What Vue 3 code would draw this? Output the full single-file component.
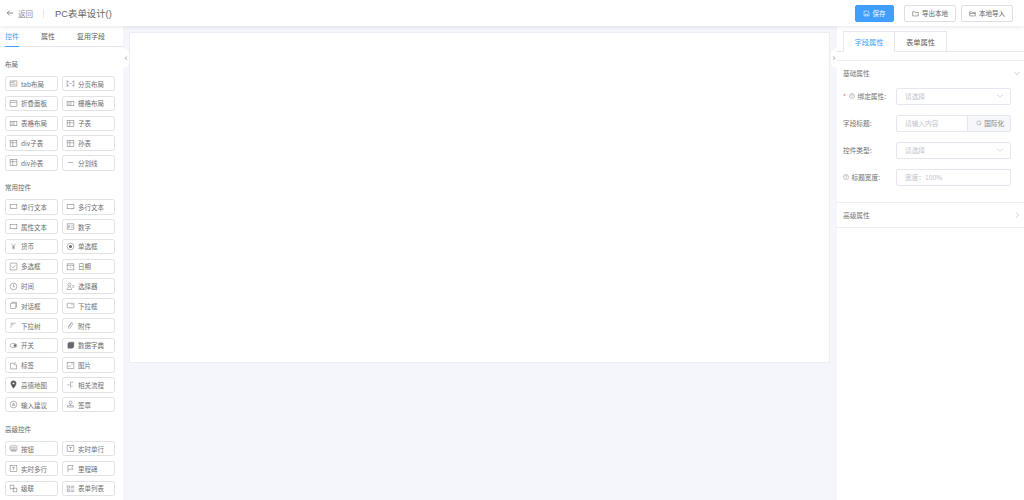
<script setup>
const icons = {
  tab: '<path d="M1.500 2.500h9v7h-9zM1.500 4.500h5v-2M3 7h6" />',
  page: '<path d="M1.500 1.500v9M10.500 1.500v9M1.500 3.500h2.500M8 3.500h2.500M1.500 8.500h2.500M8 8.500h2.500M4.500 6h3" />',
  fold: '<rect x="1.500" y="2" width="9" height="8" rx=".5"/><path d="M1.500 4.500h9"/>',
  grid: '<rect x="1.500" y="3" width="9" height="6"/><path d="M6.500 3v6M3 5h2M3 7h2"/>',
  table: '<rect x="1.500" y="2" width="9" height="8"/><path d="M1.500 5h9M5 2v8"/>',
  line: '<path d="M2.500 6h7"/>',
  input: '<rect x="1.500" y="3.500" width="9" height="5"/>',
  area: '<rect x="1.500" y="3" width="9" height="6"/><path d="M8 9v1"/>',
  num: '<rect x="1.500" y="2.500" width="9" height="7"/><path d="M3 5h2v2H3zM7 5h2M7 7h2"/>',
  yen: '<path d="M3.500 2.500 6 6l2.500-3.500M6 6v4M4 6.500h4M4 8h4"/>',
  radio: '<circle cx="6" cy="6" r="4.500"/><circle cx="6" cy="6" r="2" fill="#666" stroke="none"/>',
  check: '<rect x="1.500" y="1.500" width="9" height="9" rx=".5"/><path d="m3.500 6 2 2 3-4"/>',
  date: '<rect x="1.500" y="2.500" width="9" height="8"/><path d="M1.500 4.500h9M5 7h2"/>',
  time: '<circle cx="6" cy="6" r="4.500"/><path d="M6 3v3.500h2"/>',
  user: '<circle cx="4.500" cy="3.500" r="2"/><path d="M1.500 10c0-2.500 1.500-3.500 3-3.500s3 1 3 3.500zM8 5h3M8.500 7H11"/>',
  dialog: '<rect x="2" y="3" width="7" height="7" rx=".5"/><path d="M4 3V1.800h6V8H9"/>',
  select: '<rect x="1.500" y="3" width="9" height="6" rx=".5"/><path d="M7 5h2"/>',
  tree: '<path d="M2 3h7M2 5h4M2 7h2M2 9h1"/>',
  clip: '<path d="m7.500 3-4 5c-1 1.500 1 2.500 2 1.200l3.200-4.700C10 3.500 8 1 6.500 2.500L3 7.500"/>',
  toggle: '<rect x="1.500" y="3.500" width="9" height="5" rx="2.500"/><circle cx="8" cy="6" r="1.500" fill="#666"/>',
  book: '<path d="M2.500 9V3l2-1.500h6V8l-2 1.500h-6z" fill="#666"/>',
  tag: '<path d="M2 3h5v2h3v5.500H2zM8.500 1v2"/>',
  image: '<rect x="1.500" y="2" width="9" height="8"/><path d="m3 8 2-2 1.500 1.500M7 4h2"/>',
  pin: '<path d="M6 1C3.800 1 2.500 2.500 2.500 4.500 2.500 7 6 11 6 11s3.500-4 3.500-6.500C9.500 2.500 8.200 1 6 1z" fill="#555"/><circle cx="6" cy="4.500" r="1.300" fill="#fff" stroke="none"/>',
  flow: '<path d="M1.500 6.500h3M7 3h3M7 8h2M6 2v8"/>',
  suggest: '<circle cx="6" cy="6" r="4.500"/><path d="M4.300 8 6 3.800 7.700 8M5 6.800h2"/>',
  stamp: '<circle cx="6" cy="3.500" r="2"/><path d="M6 5.500V7M2 7.500h8v2H2z"/>',
  button: '<rect x="1.500" y="2.500" width="9" height="6" rx="1"/><path d="M3 5h6M3 7h6M3 9.500h7"/>',
  text: '<rect x="1.500" y="2" width="9" height="8"/><path d="M4 4.500h4M6 4.500V8"/>',
  flag: '<path d="M2.500 11V2h7L8 4.500 9.500 7h-7"/>',
  cascade: '<rect x="1.500" y="1.500" width="5" height="5"/><rect x="5.500" y="5.500" width="5" height="5"/>',
  list: '<path d="M1.500 2.500h3v3h-3zM1.500 7.500h3v2.500h-3zM6 3h5M6 5h5M6 8h5M6 10h5"/>'
}

const groups = [
  {
    title: '布局',
    items: [
      ['tab布局', 'tab'], ['分页布局', 'page'], ['折叠面板', 'fold'], ['栅格布局', 'grid'],
      ['表格布局', 'grid'], ['子表', 'table'], ['div子表', 'table'], ['孙表', 'table'],
      ['div孙表', 'table'], ['分割线', 'line']
    ]
  },
  {
    title: '常用控件',
    items: [
      ['单行文本', 'input'], ['多行文本', 'area'], ['属性文本', 'area'], ['数字', 'num'],
      ['货币', 'yen'], ['单选框', 'radio'], ['多选框', 'check'], ['日期', 'date'],
      ['时间', 'time'], ['选择器', 'user'], ['对话框', 'dialog'], ['下拉框', 'select'],
      ['下拉树', 'tree'], ['附件', 'clip'], ['开关', 'toggle'], ['数据字典', 'book'],
      ['标签', 'tag'], ['图片', 'image'], ['高德地图', 'pin'], ['相关流程', 'flow'],
      ['输入建议', 'suggest'], ['签章', 'stamp']
    ]
  },
  {
    title: '高级控件',
    items: [
      ['按钮', 'button'], ['实时单行', 'text'], ['实时多行', 'text'], ['里程碑', 'flag'],
      ['级联', 'cascade'], ['表单列表', 'list']
    ]
  }
]
</script>

<template>
  <div class="page">
    <header class="topbar">
      <div class="back">
        <svg class="back-icon" viewBox="0 0 10 10"><path d="M9 5H1.500M4.500 2 1.500 5l3 3" /></svg>
        <span>返回</span>
      </div>
      <i class="sep"></i>
      <span class="title">PC表单设计()</span>
      <div class="actions">
        <button class="btn primary">
          <svg viewBox="0 0 10 10"><path d="M1.500 1.500h5.500l1.500 1.500v5.500h-7zM3.500 8.500V6h3v2.500" /></svg>
          保存
        </button>
        <button class="btn">
          <svg viewBox="0 0 10 10"><path d="M1 2.500h3l1 1h4v5H1z" /></svg>
          导出本地
        </button>
        <button class="btn">
          <svg viewBox="0 0 10 10"><path d="M1 2.500h3l1 1h4v5H1zM1 5h8" /></svg>
          本地导入
        </button>
      </div>
    </header>

    <div class="body">
      <aside class="left">
        <nav class="left-tabs">
          <span class="active">控件</span>
          <span>属性</span>
          <span>复用字段</span>
        </nav>
        <div class="left-list">
          <section v-for="g in groups" :key="g.title">
            <h4>{{ g.title }}</h4>
            <div class="items">
              <div v-for="it in g.items" :key="it[0]" class="item">
                <svg viewBox="0 0 12 12" v-html="icons[it[1]]"></svg>
                <span>{{ it[0] }}</span>
              </div>
            </div>
          </section>
        </div>
        <div class="fold fold-left">‹</div>
      </aside>

      <main class="center">
        <div class="canvas"></div>
      </main>

      <aside class="right">
        <div class="fold fold-right">›</div>
        <nav class="right-tabs">
          <span class="active">字段属性</span>
          <span>表单属性</span>
        </nav>
        <div class="panel">
          <div class="panel-head">
            <span>基础属性</span>
            <svg viewBox="0 0 10 10"><path d="m1.500 3.500 3.500 3.500 3.500-3.500" /></svg>
          </div>
          <div class="field">
            <label>
              <em>*</em>
              <svg class="help" viewBox="0 0 10 10"><circle cx="5" cy="5" r="4.200" /><path d="M3.500 4C3.500 2.400 6.500 2.400 6.500 4 6.500 5 5 5 5 6.200M5 7v.8" /></svg>
              绑定属性:
            </label>
            <div class="control"><span>请选择</span><svg viewBox="0 0 10 10"><path d="m1.500 3.500 3.500 3 3.500-3" /></svg></div>
          </div>
          <div class="field">
            <label>字段标题:</label>
            <div class="control with-append">
              <span>请输入内容</span>
              <div class="append">
                <svg viewBox="0 0 10 10"><circle cx="4.800" cy="4.800" r="3.300" /><path d="m7.200 7.200 1.300 1.300" /></svg>
                国际化
              </div>
            </div>
          </div>
          <div class="field">
            <label>控件类型:</label>
            <div class="control"><span>请选择</span><svg viewBox="0 0 10 10"><path d="m1.500 3.500 3.500 3 3.500-3" /></svg></div>
          </div>
          <div class="field">
            <label>
              <svg class="help" viewBox="0 0 10 10"><circle cx="5" cy="5" r="4.200" /><path d="M3.500 4C3.500 2.400 6.500 2.400 6.500 4 6.500 5 5 5 5 6.200M5 7v.8" /></svg>
              标题宽度:
            </label>
            <div class="control"><span>宽度：100%</span></div>
          </div>
        </div>
        <div class="panel-head adv">
          <span>高级属性</span>
          <svg viewBox="0 0 10 10"><path d="m3.500 1.500 3.500 3.500-3.500 3.500" /></svg>
        </div>
      </aside>
    </div>
  </div>
</template>

<style scoped>
.page {
  width: 1024px;
  height: 500px;
  overflow: hidden;
  display: flex;
  flex-direction: column;
  background: #f4f6fb;
  font-family: "Noto Sans CJK SC", "Liberation Sans", sans-serif;
  color: #606266;
}

.topbar {
  height: 26px;
  flex: none;
  display: flex;
  align-items: center;
  background: #fff;
  box-shadow: 0 1px 4px rgba(0, 21, 41, 0.1);
  position: relative;
  z-index: 2;
}

.back {
  display: flex;
  align-items: center;
  margin-left: 6px;
  font-size: 7.500px;
  color: #8a8d93;
}

.back-icon {
  width: 8px;
  height: 8px;
  margin-right: 4px;
  fill: none;
  stroke: #666;
  stroke-width: 0.9;
}

.sep {
  width: 1px;
  height: 9px;
  margin: 0 11px 0 10px;
  background: #e6e8ec;
}

.title {
  font-size: 9.400px;
  color: #666;
  font-family: "Liberation Sans", "Noto Sans CJK SC", sans-serif;
}

.actions {
  margin-left: auto;
  margin-right: 11px;
  display: flex;
  gap: 5px;
}

.btn {
  width: 52px;
  height: 17px;
  padding: 0;
  display: flex;
  align-items: center;
  justify-content: center;
  gap: 3px;
  border: 1px solid #dcdfe6;
  border-radius: 2px;
  background: #fff;
  color: #606266;
  font-family: inherit;
  font-size: 6.500px;
}

.btn svg {
  width: 7px;
  height: 7px;
  fill: none;
  stroke: currentColor;
  stroke-width: 0.8;
}

.btn.primary {
  width: 39px;
  margin-right: 5.500px;
  border-color: #409eff;
  background: #409eff;
  color: #fff;
}

.body {
  flex: 1;
  min-height: 0;
  display: flex;
}

.left {
  width: 123px;
  flex: none;
  position: relative;
  background: #fff;
}

.left-tabs {
  height: 20px;
  display: flex;
  gap: 22px;
  padding-left: 5px;
  border-bottom: 1px solid #e4e7ed;
  font-size: 7px;
  line-height: 20px;
}

.left-tabs span {
  position: relative;
}

.left-tabs .active {
  color: #409eff;
}

.left-tabs .active::after {
  content: "";
  position: absolute;
  left: 0;
  right: 0;
  bottom: -1px;
  height: 1px;
  background: #409eff;
}

.left-list {
  padding: 8px 8.500px 0 5px;
}

.left-list h4 {
  margin: 0 0 3px;
  height: 18px;
  line-height: 18px;
  font-size: 6.500px;
  font-weight: 400;
  color: #666;
}

.left-list section {
  margin-bottom: 7.700px;
}

.items {
  display: grid;
  grid-template-columns: 52.500px 52.500px;
  column-gap: 4.500px;
  row-gap: 4.400px;
}

.item {
  height: 15.400px;
  box-sizing: border-box;
  display: flex;
  align-items: center;
  padding-left: 2.500px;
  border: 1px solid #e0e2e6;
  border-radius: 2.500px;
  font-size: 6.500px;
  white-space: nowrap;
  color: #6e6e6e;
}

.item svg {
  width: 9px;
  height: 9px;
  margin-right: 3.500px;
  flex: none;
  fill: none;
  stroke: #777;
  stroke-width: 0.7;
}

.fold {
  position: absolute;
  top: 22px;
  width: 6px;
  height: 20px;
  display: flex;
  align-items: center;
  justify-content: center;
  background: #fff;
  color: #9a9a9a;
  font-size: 9px;
  font-family: "Liberation Sans", sans-serif;
}

.fold-left {
  right: -6px;
  border-radius: 0 6px 6px 0;
}

.fold-right {
  left: -6px;
  border-radius: 6px 0 0 6px;
}

.center {
  flex: 1;
  min-width: 0;
  padding: 6px 7.500px 0 6px;
}

.canvas {
  height: 331px;
  box-sizing: border-box;
  background: #fff;
  border: 1px solid #ebeef5;
}

.right {
  width: 187px;
  flex: none;
  position: relative;
  background: #fff;
}

.right-tabs {
  height: 26px;
  box-sizing: border-box;
  padding: 5px 0 0 6px;
  display: flex;
  border-bottom: 1px solid #e4e7ed;
  font-size: 7.300px;
}

.right-tabs span {
  width: 52px;
  height: 21px;
  box-sizing: border-box;
  display: flex;
  align-items: center;
  justify-content: center;
  border: 1px solid #e4e7ed;
  border-left: 0;
  color: #606266;
}

.right-tabs .active {
  border-left: 1px solid #e4e7ed;
  border-bottom-color: #fff;
  color: #409eff;
}

.panel {
  margin-top: 8px;
  border-top: 1px solid #ebeef5;
  border-bottom: 1px solid #ebeef5;
  padding-bottom: 6px;
}

.panel-head {
  height: 23px;
  display: flex;
  align-items: center;
  justify-content: space-between;
  padding: 0 3px 0 6px;
  font-size: 6.700px;
  color: #777;
}

.panel > .panel-head {
  margin-bottom: 3.500px;
}

.panel-head svg {
  width: 8px;
  height: 8px;
  fill: none;
  stroke: #b5b7bb;
  stroke-width: 0.8;
}

.adv {
  height: 24px;
  border-bottom: 1px solid #ebeef5;
}

.field {
  display: flex;
  align-items: center;
  height: 17px;
  margin-bottom: 10px;
  padding-left: 6px;
  font-size: 6.700px;
}

.field label {
  width: 53px;
  display: flex;
  align-items: center;
  color: #707070;
}

.field em {
  width: 6px;
  font-style: normal;
  color: #f56c6c;
}

.help {
  width: 6px;
  height: 6px;
  margin-right: 2.500px;
  flex: none;
  fill: none;
  stroke: #888;
  stroke-width: 0.8;
}

.control {
  width: 114.500px;
  height: 17px;
  box-sizing: border-box;
  display: flex;
  align-items: center;
  justify-content: space-between;
  padding-left: 8px;
  border: 1px solid #e4e7ed;
  border-radius: 2px;
  color: #c0c4cc;
}

.control > svg {
  width: 8px;
  height: 8px;
  margin-right: 6px;
  fill: none;
  stroke: #c0c4cc;
  stroke-width: 0.8;
}

.with-append {
  overflow: hidden;
}

.append {
  width: 43px;
  height: 100%;
  box-sizing: border-box;
  padding-left: 3px;
  display: flex;
  align-items: center;
  justify-content: center;
  gap: 2.500px;
  background: #f5f7fa;
  border-left: 1px solid #e4e7ed;
  color: #888;
}

.append svg {
  width: 6px;
  height: 6px;
  fill: none;
  stroke: #888;
  stroke-width: 0.8;
}
</style>
